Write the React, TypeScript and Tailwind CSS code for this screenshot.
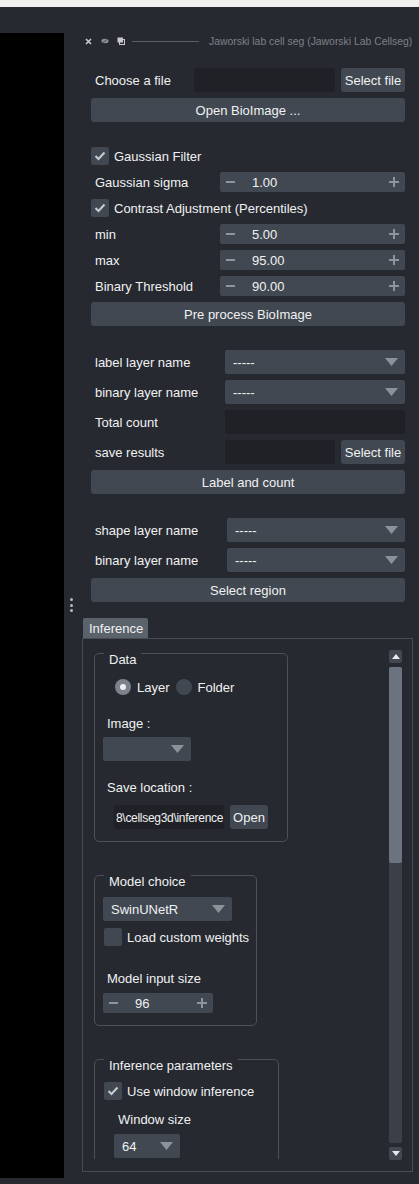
import React from 'react';

const font = "font-['Liberation_Sans',Arial,sans-serif]";

function Arrow() {
  return (
    <svg width="13" height="8" viewBox="0 0 13 8" className="shrink-0">
      <path d="M0 0 L13 0 L6.5 8 Z" fill="#8c9299" />
    </svg>
  );
}

function Check() {
  return (
    <svg width="12" height="10" viewBox="0 0 12 10">
      <path d="M1.5 5 L4.5 8 L10.5 1.5" stroke="#c9ccd0" strokeWidth="2" fill="none" />
    </svg>
  );
}

function Checkbox({ checked, label }: { checked?: boolean; label: string }) {
  return (
    <div className="flex items-center h-[20px]">
      <div className="w-[18px] h-[18px] bg-[#414851] rounded-[2px] flex items-center justify-center">
        {checked && <Check />}
      </div>
      <span className="ml-[5px] pt-[2px]">{label}</span>
    </div>
  );
}

function Spin({ value, width }: { value: string; width?: string }) {
  return (
    <div className={`h-[20px] bg-[#414851] rounded-[2px] flex items-center px-[6px] ${width ?? 'flex-1'}`}>
      <svg width="9" height="2" viewBox="0 0 9 2" className="shrink-0">
        <rect width="9" height="2" fill="#8f959c" />
      </svg>
      <span className="ml-[17px] pt-[2px]">{value}</span>
      <svg width="10" height="10" viewBox="0 0 10 10" className="ml-auto shrink-0">
        <rect x="0" y="4" width="10" height="2" fill="#8f959c" />
        <rect x="4" y="0" width="2" height="10" fill="#8f959c" />
      </svg>
    </div>
  );
}

function Combo({ text, width }: { text?: string; width?: string }) {
  return (
    <div className={`h-[24px] bg-[#414851] rounded-[2px] flex items-center pl-[8px] pr-[7px] ${width ?? 'flex-1'}`}>
      <span className="pt-[2px]">{text}</span>
      <span className="ml-auto"><Arrow /></span>
    </div>
  );
}

function Btn({ children, className }: { children: React.ReactNode; className?: string }) {
  return (
    <div className={`h-[24px] pt-[2px] bg-[#414851] rounded-[3px] flex items-center justify-center ${className ?? ''}`}>
      {children}
    </div>
  );
}

function Row({ label, labelW, children }: { label: string; labelW: string; children: React.ReactNode }) {
  return (
    <div className="flex items-center">
      <div className={`${labelW} shrink-0 pl-[4px] pt-[2px]`}>{label}</div>
      {children}
    </div>
  );
}

function Group({ title, className, children }: { title: string; className: string; children: React.ReactNode }) {
  return (
    <div className={`relative border border-[#4b5059] rounded-[5px] shrink-0 ${className}`}>
      <span className="absolute left-[9px] top-[-2px] px-[5px] bg-[#262930]">{title}</span>
      {children}
    </div>
  );
}

function ScrollBtn({ up }: { up?: boolean }) {
  return (
    <div className="w-[13px] h-[13px] bg-[#414851] rounded-[2px] flex items-center justify-center">
      <svg width="8" height="5" viewBox="0 0 8 5">
        <path d={up ? 'M0 5 L8 5 L4 0 Z' : 'M0 0 L8 0 L4 5 Z'} fill="#e6e8ea" />
      </svg>
    </div>
  );
}

export default function App() {
  return (
    <div className={`w-[419px] h-[1184px] bg-[#262930] text-[13px] leading-[16px] text-[#f0f1f2] overflow-hidden flex flex-col ${font}`}>
      <div className="h-[7px] bg-[#f0f0f0] shrink-0" />
      <div className="flex flex-1 min-h-0">
        {/* viewer canvas */}
        <div className="w-[64px] shrink-0 pt-[26px] pb-[6px] flex flex-col">
          <div className="flex-1 bg-black" />
        </div>

        <div className="flex-1 flex flex-col min-w-0">
          {/* dock title bar */}
          <div className="h-[20px] mt-[24px] flex items-center pl-[21px] shrink-0">
            <svg width="7" height="7" viewBox="0 0 7 7">
              <path d="M1 1 L6 6 M6 1 L1 6" stroke="#c8cacd" strokeWidth="1.6" />
            </svg>
            <svg width="8" height="6" viewBox="0 0 8 6" className="ml-[9px]">
              <ellipse cx="4" cy="3" rx="3.6" ry="2.2" fill="#8e9297" />
              <path d="M1 5 L7 1" stroke="#5d6168" strokeWidth="1.2" />
            </svg>
            <svg width="8" height="8" viewBox="0 0 8 8" className="ml-[8px]">
              <rect x="0.5" y="0.5" width="5.5" height="5" fill="#c8cacd" />
              <rect x="2.5" y="2.5" width="5" height="5" fill="none" stroke="#c8cacd" strokeWidth="1" />
            </svg>
            <div className="ml-[7px] w-[67px] h-px bg-[#5a5f66]" />
            <span className="ml-[10px] pt-[1px] text-[10.4px] text-[#7c8188] whitespace-nowrap">
              Jaworski lab cell seg (Jaworski Lab Cellseg)
            </span>
          </div>

          <div className="flex flex-1 min-h-0">
            {/* splitter handle */}
            <div className="w-[18px] shrink-0 pl-[6px] pt-[547px] flex flex-col gap-[2.5px]">
              <div className="w-[3px] h-[3px] rounded-full bg-[#b7bbc0]" />
              <div className="w-[3px] h-[3px] rounded-full bg-[#b7bbc0]" />
              <div className="w-[3px] h-[3px] rounded-full bg-[#b7bbc0]" />
            </div>

            <div className="flex-1 min-w-0 pr-[6px] pt-[17px] flex flex-col">
              <div className="pl-[9px] pr-[8px] flex flex-col">
                <div className="flex flex-col gap-[6px]">
                  <Row label="Choose a file" labelW="w-[103px]">
                    <div className="h-[24px] w-[141px] bg-[#1f2126] rounded-[2px]" />
                    <Btn className="ml-[6px] flex-1">Select file</Btn>
                  </Row>
                  <Btn>Open BioImage ...</Btn>
                </div>

                <div className="mt-[24px] flex flex-col gap-[6px]">
                  <Checkbox checked label="Gaussian Filter" />
                  <Row label="Gaussian sigma" labelW="w-[129px]"><Spin value="1.00" /></Row>
                  <Checkbox checked label="Contrast Adjustment (Percentiles)" />
                  <Row label="min" labelW="w-[129px]"><Spin value="5.00" /></Row>
                  <Row label="max" labelW="w-[129px]"><Spin value="95.00" /></Row>
                  <Row label="Binary Threshold" labelW="w-[129px]"><Spin value="90.00" /></Row>
                  <Btn>Pre process BioImage</Btn>
                </div>

                <div className="mt-[24px] flex flex-col gap-[6px]">
                  <Row label="label layer name" labelW="w-[134px]"><Combo text="-----" /></Row>
                  <Row label="binary layer name" labelW="w-[134px]"><Combo text="-----" /></Row>
                  <Row label="Total count" labelW="w-[134px]">
                    <div className="h-[24px] flex-1 bg-[#1f2126] rounded-[2px]" />
                  </Row>
                  <Row label="save results" labelW="w-[134px]">
                    <div className="h-[24px] w-[110px] bg-[#1f2126] rounded-[2px]" />
                    <Btn className="ml-[6px] flex-1">Select file</Btn>
                  </Row>
                  <Btn>Label and count</Btn>
                </div>

                <div className="mt-[24px] flex flex-col gap-[6px]">
                  <Row label="shape layer name" labelW="w-[136px]"><Combo text="-----" /></Row>
                  <Row label="binary layer name" labelW="w-[136px]"><Combo text="-----" /></Row>
                  <Btn>Select region</Btn>
                </div>
              </div>

              {/* tab widget */}
              <div className="mt-[16px] ml-[1px] w-[65px] h-[20px] pt-[2px] bg-[#5a626c] rounded-t-[2px] flex items-center pl-[6px]">
                Inference
              </div>
              <div className="h-[534px] border border-[#474c54] flex shrink-0">
                <div className="flex-1 h-[520px] overflow-hidden pl-[11px] pt-[14px] flex flex-col">
                  <Group title="Data" className="w-[194px] h-[189px] flex flex-col">
                    <div className="mt-[25px] pl-[20px] flex items-center h-[16px]">
                      <div className="w-[16px] h-[16px] rounded-full bg-[#7b828b] flex items-center justify-center">
                        <div className="w-[6px] h-[6px] rounded-full bg-[#eceef0]" />
                      </div>
                      <span className="ml-[6px] pt-[2px]">Layer</span>
                      <div className="ml-[6px] w-[16px] h-[16px] rounded-full bg-[#414851]" />
                      <span className="ml-[6px] pt-[2px]">Folder</span>
                    </div>
                    <div className="mt-[21px] pl-[12px]">Image :</div>
                    <div className="mt-[5px] pl-[8px]"><Combo width="w-[88px]" /></div>
                    <div className="mt-[19px] pl-[12px]">Save location :</div>
                    <div className="mt-[9px] pl-[19px] flex">
                      <div className="h-[24px] w-[110px] pt-[2px] bg-[#1f2126] rounded-[2px] flex items-center pl-[2px] overflow-hidden whitespace-nowrap text-[12px] tracking-[-0.3px]">
                        8\cellseg3d\inference
                      </div>
                      <Btn className="ml-[6px] w-[38px]">Open</Btn>
                    </div>
                  </Group>

                  <Group title="Model choice" className="mt-[33px] w-[163px] h-[151px] flex flex-col">
                    <div className="mt-[21px] pl-[8px]"><Combo text="SwinUNetR" width="w-[129px]" /></div>
                    <div className="mt-[6px] pl-[9px]"><Checkbox label="Load custom weights" /></div>
                    <div className="mt-[24px] pl-[12px]">Model input size</div>
                    <div className="mt-[6px] pl-[8px]"><Spin value="96" width="w-[110px]" /></div>
                  </Group>

                  <Group title="Inference parameters" className="mt-[33px] w-[185px] h-[200px] flex flex-col">
                    <div className="mt-[21px] pl-[9px]"><Checkbox checked label="Use window inference" /></div>
                    <div className="mt-[11px] pl-[23px]">Window size</div>
                    <div className="mt-[6px] pl-[19px]"><Combo text="64" width="w-[66px]" /></div>
                  </Group>
                </div>

                {/* scrollbar */}
                <div className="w-[13px] mr-[10px] pt-[11px] flex flex-col">
                  <ScrollBtn up />
                  <div className="mt-[4px] h-[476px] bg-[#3b4048] rounded-[2px] flex flex-col">
                    <div className="h-[196px] bg-[#6b7380] rounded-[2px]" />
                  </div>
                  <div className="mt-[4px]"><ScrollBtn /></div>
                </div>
              </div>
            </div>
          </div>
        </div>
      </div>
    </div>
  );
}
